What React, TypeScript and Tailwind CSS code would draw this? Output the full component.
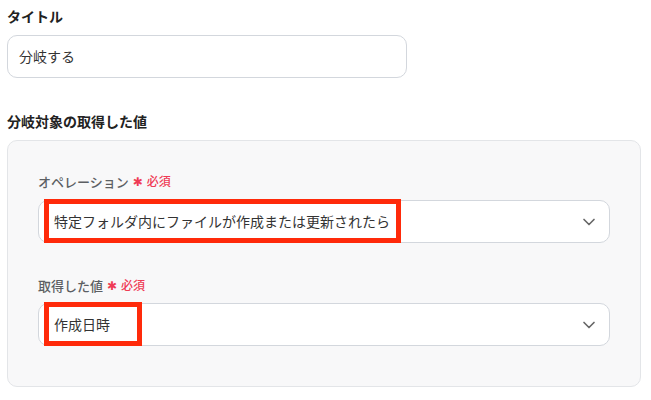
import { ChevronDown } from "lucide-react"

const font = { fontFamily: '"Noto Sans", "Noto Sans CJK JP", sans-serif' }

function Required() {
  return (
    <span className="ml-[4px] inline-flex items-center gap-[4px] text-[#ef3b55]">
      <span className="text-[12px] leading-none" style={{ fontFamily: '"DejaVu Sans", sans-serif' }}>
        ✱
      </span>
      <span className="text-[12px]">必須</span>
    </span>
  )
}

function SelectBox({ value, markWidth }: { value: string; markWidth: string }) {
  return (
    <div className="relative flex h-[43px] items-center justify-between rounded-[10px] border border-[#d3d7dd] bg-white pl-[15px] pr-[10px]">
      <span className="text-[14px] text-[#333]">{value}</span>
      <ChevronDown size={20} strokeWidth={2} className="text-[#666]" />
      <div className={`pointer-events-none absolute left-[5px] top-[-2px] h-[44px] border-[5px] border-[#ff2a0a] ${markWidth}`} />
    </div>
  )
}

export default function App() {
  return (
    <div className="min-h-[400px] bg-white pl-[7px] pt-[7px]" style={font}>
      <div className="text-[14px] font-bold leading-[20px] text-[#222]">タイトル</div>
      <div className="mt-[8px] flex h-[43px] w-[400px] items-center rounded-[10px] border border-[#d3d7dd] bg-white pl-[11px] text-[14px] text-[#333]">
        分岐する
      </div>

      <div className="mt-[34px] text-[14px] font-bold leading-[20px] text-[#222]">分岐対象の取得した値</div>

      <div className="mt-[8px] h-[247px] w-[634px] rounded-[10px] border border-[#e3e5e8] bg-[#f8f8f9] px-[30px] pt-[31px]">
        <div className="flex items-center text-[13px] font-medium leading-[20px] text-[#5c5f63]">
          オペレーション
          <Required />
        </div>
        <div className="mt-[8px]">
          <SelectBox value="特定フォルダ内にファイルが作成または更新されたら" markWidth="w-[357px]" />
        </div>

        <div className="mt-[33px] flex items-center text-[13px] font-medium leading-[20px] text-[#5c5f63]">
          取得した値
          <Required />
        </div>
        <div className="mt-[7px]">
          <SelectBox value="作成日時" markWidth="w-[98px]" />
        </div>
      </div>
    </div>
  )
}
